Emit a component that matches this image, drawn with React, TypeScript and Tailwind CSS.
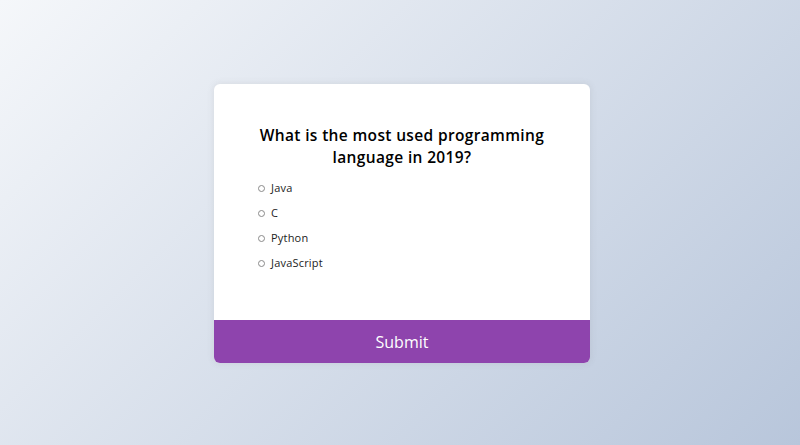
import React, { useState } from 'react';

const OPTIONS = ['Java', 'C', 'Python', 'JavaScript'];

export default function App() {
  const [selected, setSelected] = useState<string | null>(null);

  return (
    <div
      className="w-full h-[445px] flex items-center justify-center pl-[4px] pt-[2px] bg-[linear-gradient(315deg,#b8c6db_0%,#f5f7fa_100%)]"
      style={{ fontFamily: '"Open Sans", Inter, sans-serif' }}
    >
      <div className="w-[376px] h-[279px] bg-white rounded-[6px] shadow-[0_0_6px_1px_rgba(100,100,100,0.1)] overflow-hidden flex flex-col">
        <div className="flex-1 pt-[40px] px-[44px]">
          <h2 className="text-center text-[15.5px] leading-[22px] font-semibold tracking-[0.35px] text-black">
            What is the most used programming
            <br />
            language in 2019?
          </h2>
          <ul className="mt-[13px] flex flex-col gap-[10px]">
            {OPTIONS.map(opt => (
              <li
                key={opt}
                className="flex items-center h-[15px] text-[11px] tracking-[0.2px] text-[#222] cursor-pointer"
                onClick={() => setSelected(opt)}
              >
                <span
                  className={`w-[7px] h-[7px] rounded-full border border-[#8a8a8a] mr-[6px] ${selected === opt ? 'bg-[#8e44ad]' : 'bg-white'}`}
                />
                {opt}
              </li>
            ))}
          </ul>
        </div>
        <button className="h-[43px] w-full bg-[#8e44ad] text-white text-[16px] font-normal">
          Submit
        </button>
      </div>
    </div>
  );
}
